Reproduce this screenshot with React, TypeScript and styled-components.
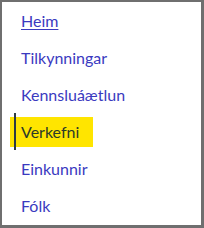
import React from "react";
import styled, { createGlobalStyle } from "styled-components";

const Global = createGlobalStyle`
  html, body { margin: 0; padding: 0; background: #ffffff; }
  body { font-family: Lato, "Noto Sans", sans-serif; }
`;

const Frame = styled.nav`
  box-sizing: border-box;
  width: 204px;
  height: 228px;
  border-style: solid;
  border-color: #6f6f6f;
  border-width: 2px 3px 3px 2px;
  background: #ffffff;
`;

const List = styled.ul`
  list-style: none;
  margin: 0;
  padding: 0;
  display: flex;
  flex-direction: column;
`;

const Item = styled.li<{ $active?: boolean }>`
  position: relative;
  height: 37px;
  display: flex;
  align-items: center;
  padding-left: ${(p) => (p.$active ? "8px" : "19px")};
  ${(p) =>
    p.$active &&
    `
    &::before {
      content: "";
      position: absolute;
      left: 12px;
      top: 0;
      bottom: 0;
      width: 2px;
      background: #2d3b45;
    }
  `}
`;

const Link = styled.a<{ $active?: boolean; $current?: boolean }>`
  font-size: 16px;
  line-height: 30px;
  text-decoration: ${(p) => (p.$current ? "underline" : "none")};
  text-decoration-thickness: 1px;
  text-underline-offset: 2px;
  color: ${(p) => (p.$active ? "#2b3a2a" : "#3a3abf")};
  ${(p) =>
    p.$active &&
    `
    background: #ffe500;
    padding: 0 14px 0 11px;
    margin-top: 1px;
  `}
`;

const items = [
  { label: "Heim", current: true },
  { label: "Tilkynningar" },
  { label: "Kennsluáætlun" },
  { label: "Verkefni", active: true },
  { label: "Einkunnir" },
  { label: "Fólk" },
];

export default function App() {
  return (
    <>
      <Global />
      <Frame>
        <List>
          {items.map((it) => (
            <Item key={it.label} $active={it.active}>
              <Link href="#" $active={it.active} $current={it.current}>
                {it.label}
              </Link>
            </Item>
          ))}
        </List>
      </Frame>
    </>
  );
}
